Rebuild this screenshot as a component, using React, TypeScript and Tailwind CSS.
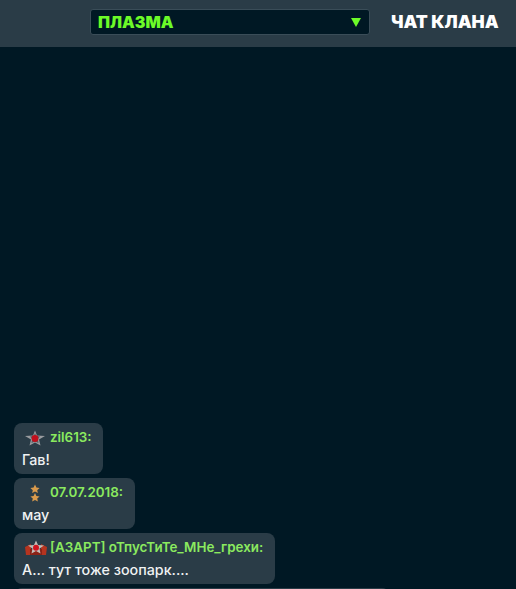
import React from "react";

const RedStar = () => (
  <svg width="20" height="16" viewBox="0 0 20 16">
    <path d="M10 0.5 L12 5.5 L20 6 L14 9.5 L15.5 15.5 L10 12.5 L4.5 15.5 L6 9.5 L0 6 L8 5.5 Z" fill="#9a9ca0" />
    <path d="M10 3 L11.3 6 L15 6.5 L12.8 9 L13.5 13 L10 11.4 L6.5 13 L7.2 9 L5 6.5 L8.7 6 Z" fill="#555a60" />
    <circle cx="10" cy="8.5" r="3.4" fill="#c00f1c" />
  </svg>
);

const TwoStars = () => (
  <svg width="12" height="18" viewBox="0 0 12 18">
    <path d="M6 0.5 L7.4 3.6 L10.6 4 L8.2 6.2 L8.9 9 L6 7.4 L3.1 9 L3.8 6.2 L1.4 4 L4.6 3.6 Z" fill="#d99a4c" />
    <path d="M6 9 L7.4 12 L10.6 12.4 L8.2 14.6 L8.9 17.5 L6 15.9 L3.1 17.5 L3.8 14.6 L1.4 12.4 L4.6 12 Z" fill="#d99a4c" />
  </svg>
);

const WingStar = () => (
  <svg width="22" height="16" viewBox="0 0 22 16">
    <path d="M0 7 L6 4 L6 15 L1 15 Z" fill="#b5341f" />
    <path d="M22 7 L16 4 L16 15 L21 15 Z" fill="#b5341f" />
    <path d="M5 9 H17 V15 H5 Z" fill="#8a2216" />
    <path d="M11 0.5 L13 5 L19 5.5 L14.5 8.5 L15.5 13.5 L11 11 L6.5 13.5 L7.5 8.5 L3 5.5 L9 5 Z" fill="#c2bdb8" />
    <circle cx="11" cy="7.8" r="3" fill="#d0141f" />
  </svg>
);

const messages = [
  { icon: <RedStar />, iconBox: "w-[20px] ml-[3px] mr-[5px]", author: "zil613:", text: "Гав!", width: "w-[89px]" },
  { icon: <TwoStars />, iconBox: "w-[12px] ml-[7px] mr-[9px]", author: "07.07.2018:", text: "мау", width: "w-[121px]" },
  { icon: <WingStar />, iconBox: "w-[22px] ml-[3px] mr-[3px]", author: "[АЗАРТ] оТпусТиТе_МНе_грехи:", text: "А... тут тоже зоопарк....", width: "w-[261px]" },
];

export default function App() {
  return (
    <div className="h-[589px] w-[516px] overflow-hidden bg-[#001824] font-['Inter',sans-serif]">
      <header className="flex h-[47px] items-center bg-[#2a3c47] pb-[3px] pl-[90px]">
        <div className="flex h-[26px] w-[280px] items-center justify-between rounded-[3px] border border-[#3a4d58] bg-[#001824] pl-[7px] pr-[8px]">
          <span className="text-[16px] font-black leading-none text-[#6cfb28]">ПЛАЗМА</span>
          <span className="h-0 w-0 border-x-[5px] border-t-[9px] border-x-transparent border-t-[#6cfb28]" />
        </div>
        <h1 className="ml-[21px] whitespace-nowrap text-[17.5px] font-black leading-none text-white">ЧАТ КЛАНА</h1>
      </header>

      <div className="flex flex-col items-start gap-1 pl-[14px] pt-[376px]">
        {messages.map((m) => (
          <div key={m.author} className={`${m.width} h-[51px] rounded-[8px] bg-[#2a3c47] px-[8px] pt-[6px]`}>
            <div className="flex h-[18px] items-center">
              <span className={`${m.iconBox} flex shrink-0 justify-center`}>{m.icon}</span>
              <span className="whitespace-nowrap text-[13.4px] font-semibold leading-none text-[#8bea5f]">{m.author}</span>
            </div>
            <p className="mt-[3px] whitespace-nowrap text-[14.3px] font-medium leading-[20px] text-[#f0f2f3]">{m.text}</p>
          </div>
        ))}
        <div className="h-[51px] w-[376px] rounded-[8px] bg-[#2a3c47]" />
      </div>
    </div>
  );
}
